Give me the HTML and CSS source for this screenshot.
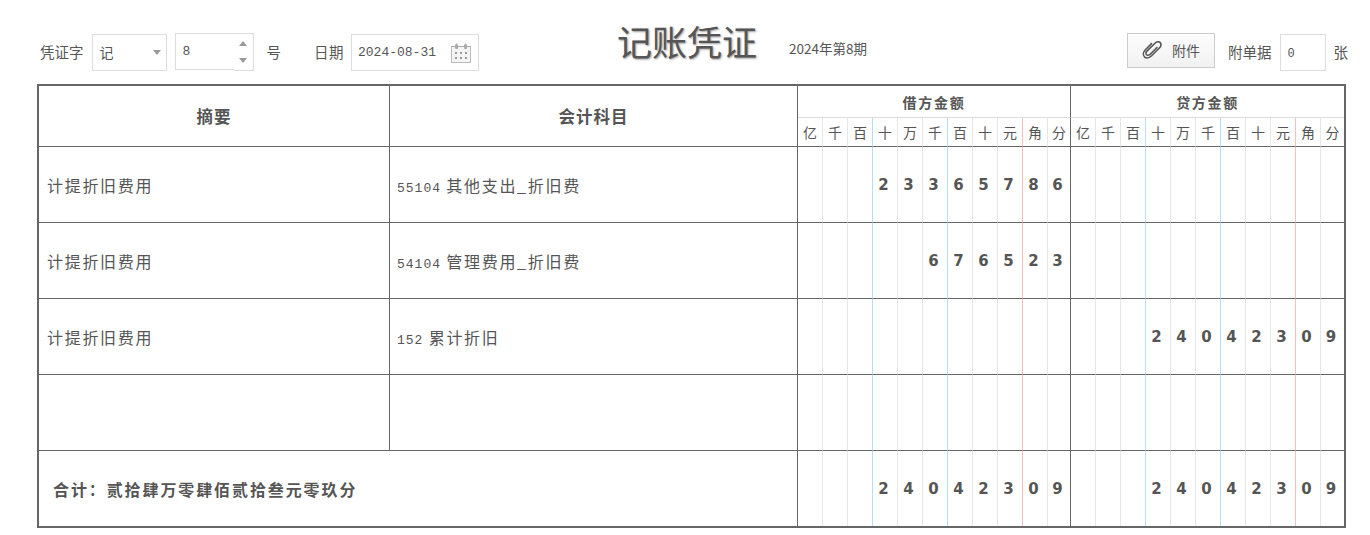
FILE: index.html
```html
<!DOCTYPE html>
<html lang="zh-CN">
<head>
<meta charset="utf-8">
<title>记账凭证</title>
<link rel="stylesheet" href="styles.css">
</head>
<body>
<header class="topbar">
  <span class="lbl">凭证字</span>
  <div class="field sel"><span>记</span><i class="caret"></i></div>
  <div class="num"><div class="field numbox">8</div><div class="spin"><i class="up"></i><i class="down"></i></div></div>
  <span class="lbl hao">号</span>
  <span class="lbl ri">日期</span>
  <div class="field date"><span class="dt">2024-08-31</span>
    <svg class="cal" width="21" height="20" viewBox="0 0 21 20" fill="none" stroke="#bbb"><rect x="0.5" y="3.5" width="19" height="16" fill="#f4f4f4"/><path d="M0.5 3.5h3M7 3.5h6M16 3.5h4" stroke="#aaa"/><path d="M5.5 0.5v5M14.5 0.5v5M4.5 1.5v4h2v-4M13.5 1.5v4h2v-4" stroke="#aaa"/><path d="M4 9h2v2H4zM9 9h2v2H9zM14 9h2v2h-2zM4 14h2v2H4zM9 14h2v2H9zM14 14h2v2h-2z" fill="#999" stroke="none"/></svg>
  </div>
  <h1 class="title">记账凭证</h1>
  <span class="period">2024年第8期</span>
  <div class="right">
    <button class="btn" type="button">
      <svg width="22" height="20" viewBox="0 0 22 20" fill="none" stroke="#555" stroke-width="1.6" stroke-linecap="round"><path d="M15 7.5 8.2 14.3c-1.2 1.2-3 1.2-3.7.4-.9-.9-.7-2.500.4-3.600L13 3.200c1.600-1.600 4-1.800 5.200-.6 1.200 1.200 1 3.600-.6 5.200l-8 8c-2.300 2.300-5.400 2.700-7.200 1-1.700-1.800-1.300-4.800 1-7.100L9.500 3.600"/></svg>
      <span>附件</span>
    </button>
    <span class="lbl att">附单据</span>
    <div class="field cnt">0</div>
    <span class="lbl zh">张</span>
  </div>
</header>
<table class="voucher">
  <colgroup>
    <col class="c-sum"><col class="c-acc">
    <col class="d"><col class="d"><col class="d"><col class="d"><col class="d"><col class="d"><col class="d"><col class="d"><col class="d"><col class="d"><col class="e">
    <col class="d"><col class="d"><col class="d"><col class="d"><col class="d"><col class="d"><col class="d"><col class="d"><col class="d"><col class="d"><col class="e">
  </colgroup>
  <thead>
    <tr class="h1">
      <th rowspan="2" class="main">摘要</th>
      <th rowspan="2" class="main">会计科目</th>
      <th colspan="11" class="grp sep">借方金额</th>
      <th colspan="11" class="grp">贷方金额</th>
    </tr>
    <tr class="h2">
      <th>亿</th><th>千</th><th class="b">百</th><th>十</th><th>万</th><th class="b">千</th><th>百</th><th>十</th><th class="r">元</th><th>角</th><th class="sep">分</th>
      <th>亿</th><th>千</th><th class="b">百</th><th>十</th><th>万</th><th class="b">千</th><th>百</th><th>十</th><th class="r">元</th><th>角</th><th class="end">分</th>
    </tr>
  </thead>
  <tbody>
    <tr>
      <td class="txt">计提折旧费用</td><td class="txt acc"><span class="code">55104</span> 其他支出_折旧费</td>
      <td></td><td></td><td class="b"></td><td>2</td><td>3</td><td class="b">3</td><td>6</td><td>5</td><td class="r">7</td><td>8</td><td class="sep">6</td>
      <td></td><td></td><td class="b"></td><td></td><td></td><td class="b"></td><td></td><td></td><td class="r"></td><td></td><td class="end"></td>
    </tr>
    <tr>
      <td class="txt">计提折旧费用</td><td class="txt acc"><span class="code">54104</span> 管理费用_折旧费</td>
      <td></td><td></td><td class="b"></td><td></td><td></td><td class="b">6</td><td>7</td><td>6</td><td class="r">5</td><td>2</td><td class="sep">3</td>
      <td></td><td></td><td class="b"></td><td></td><td></td><td class="b"></td><td></td><td></td><td class="r"></td><td></td><td class="end"></td>
    </tr>
    <tr>
      <td class="txt">计提折旧费用</td><td class="txt acc"><span class="code">152</span> 累计折旧</td>
      <td></td><td></td><td class="b"></td><td></td><td></td><td class="b"></td><td></td><td></td><td class="r"></td><td></td><td class="sep"></td>
      <td></td><td></td><td class="b"></td><td>2</td><td>4</td><td class="b">0</td><td>4</td><td>2</td><td class="r">3</td><td>0</td><td class="end">9</td>
    </tr>
    <tr>
      <td class="txt"></td><td class="txt"></td>
      <td></td><td></td><td class="b"></td><td></td><td></td><td class="b"></td><td></td><td></td><td class="r"></td><td></td><td class="sep"></td>
      <td></td><td></td><td class="b"></td><td></td><td></td><td class="b"></td><td></td><td></td><td class="r"></td><td></td><td class="end"></td>
    </tr>
    <tr class="total">
      <td colspan="2" class="txt sum">合计：贰拾肆万零肆佰贰拾叁元零玖分</td>
      <td></td><td></td><td class="b"></td><td>2</td><td>4</td><td class="b">0</td><td>4</td><td>2</td><td class="r">3</td><td>0</td><td class="sep">9</td>
      <td></td><td></td><td class="b"></td><td>2</td><td>4</td><td class="b">0</td><td>4</td><td>2</td><td class="r">3</td><td>0</td><td class="end">9</td>
    </tr>
  </tbody>
</table>
</body>
</html>
```
FILE: styles.css
```css
* { box-sizing: border-box; }
html, body { margin: 0; padding: 0; background: #fff; }
body {
  width: 1370px;
  height: 535px;
  overflow: hidden;
  color: #555;
  font-family: "Noto Sans CJK SC", "Liberation Sans", sans-serif;
  font-size: 14px;
}
.topbar {
  display: flex;
  align-items: center;
  height: 84px;
  padding: 20px 22px 0 40px;
}
.lbl { font-size: 14.500px; line-height: 20px; white-space: nowrap; }
.field {
  display: flex;
  align-items: center;
  border: 1px solid #ddd;
  background: #fff;
  font-size: 14px;
}
.sel {
  justify-content: space-between;
  width: 75px;
  height: 37px;
  margin-left: 8px;
  padding: 0 5px 0 7px;
}
.caret {
  width: 0; height: 0;
  border: 4.500px solid transparent;
  border-top: 5px solid #999;
  border-bottom: 0;
}
.num { display: flex; margin-left: 8px; align-self: center; }
.numbox {
  width: 59px;
  height: 37px;
  padding-left: 7px;
  border-right: 0;
  font-family: "Liberation Mono", monospace;
  font-size: 13px;
  margin-top: -1px;
}
.spin {
  display: flex;
  flex-direction: column;
  justify-content: space-between;
  align-items: center;
  width: 20px;
  height: 38px;
  margin-top: -1px;
  padding: 7px 0 7px;
  border: 1px solid #ddd;
  border-left: 0;
  border-bottom-width: 1px;
}
.up, .down { width: 0; height: 0; border: 4.500px solid transparent; }
.up { border-bottom: 5px solid #999; border-top: 0; }
.down { border-top: 5px solid #999; border-bottom: 0; }
.hao { margin-left: 13px; }
.ri { margin-left: 33px; letter-spacing: 0.500px; }
.date {
  justify-content: space-between;
  width: 128px;
  height: 37px;
  margin-left: 7px;
  padding: 0 6px 0 6px;
}
.dt { font-family: "Liberation Mono", monospace; font-size: 13px; }
.cal { margin-top: 2px; }
.title {
  margin: -23px 0 0 138px;
  font-size: 35px;
  font-weight: 400;
  line-height: 40px;
  white-space: nowrap;
  color: #555;
  text-shadow: 1px 1px 2px #999;
}
.period {
  margin: -9px 0 0 32px;
  font-size: 13.500px;
  white-space: nowrap;
}
.right { display: flex; align-items: center; margin-left: auto; }
.btn {
  display: flex;
  align-items: center;
  justify-content: center;
  gap: 8px;
  width: 88px;
  height: 35px;
  margin-top: -4px;
  padding: 0;
  border: 1px solid #ccc;
  background: linear-gradient(#fdfdfd, #f1f1f1);
  color: #555;
  font-family: inherit;
  font-size: 14px;
}
.att { margin-left: 13px; }
.cnt {
  width: 46px;
  height: 37px;
  margin-left: 8px;
  padding: 3px 0 0 7px;
  font-family: "Liberation Mono", monospace;
  font-size: 12px;
}
.zh { margin-left: 8px; }
.voucher {
  width: 1309px;
  margin-left: 37px;
  table-layout: fixed;
  border-collapse: separate;
  border-spacing: 0;
  border: 2px solid #666;
}
.c-sum { width: 351px; }
.c-acc { width: 408px; }
.d { width: 25px; }
.e { width: 23px; }
th, td {
  padding: 0;
  border-right: 1px solid #e6e6e6;
  border-bottom: 1px solid #666;
  text-align: center;
  color: #555;
}
.h1 { height: 32px; }
.h2 { height: 29px; }
.main {
  font-size: 16.500px;
  font-weight: 700;
  letter-spacing: 1px;
  border-right-color: #666;
}
.grp {
  font-size: 14px;
  font-weight: 700;
  letter-spacing: 1.700px;
  border-bottom-color: #ddd;
}
.h2 th { font-size: 14px; font-weight: 400; }
tbody tr { height: 76px; }
tbody tr.total { height: 75px; }
tbody tr.total td { border-bottom: 0; }
tbody td {
  padding-right: 3px;
  font-family: "DejaVu Sans", sans-serif;
  font-size: 15px;
  font-weight: 700;
}
td.txt {
  padding: 0 0 0 8px;
  text-align: left;
  font-family: "Noto Sans CJK SC", sans-serif;
  font-size: 16px;
  font-weight: 400;
  letter-spacing: 1.700px;
  white-space: nowrap;
  border-right-color: #666;
}
td.acc { padding-left: 7px; }
.code {
  font-family: "Liberation Mono", monospace;
  font-size: 13px;
  letter-spacing: 1px;
}
td.sum {
  padding-left: 14px;
  font-weight: 700;
  letter-spacing: 1.900px;
}
th.b, td.b { border-right-color: #b3e0f5; }
th.r, td.r { border-right-color: #f2c0c0; }
th.sep, td.sep { border-right-color: #666; }
th.end, td.end, th.grp:last-child { border-right: 0; }
```
